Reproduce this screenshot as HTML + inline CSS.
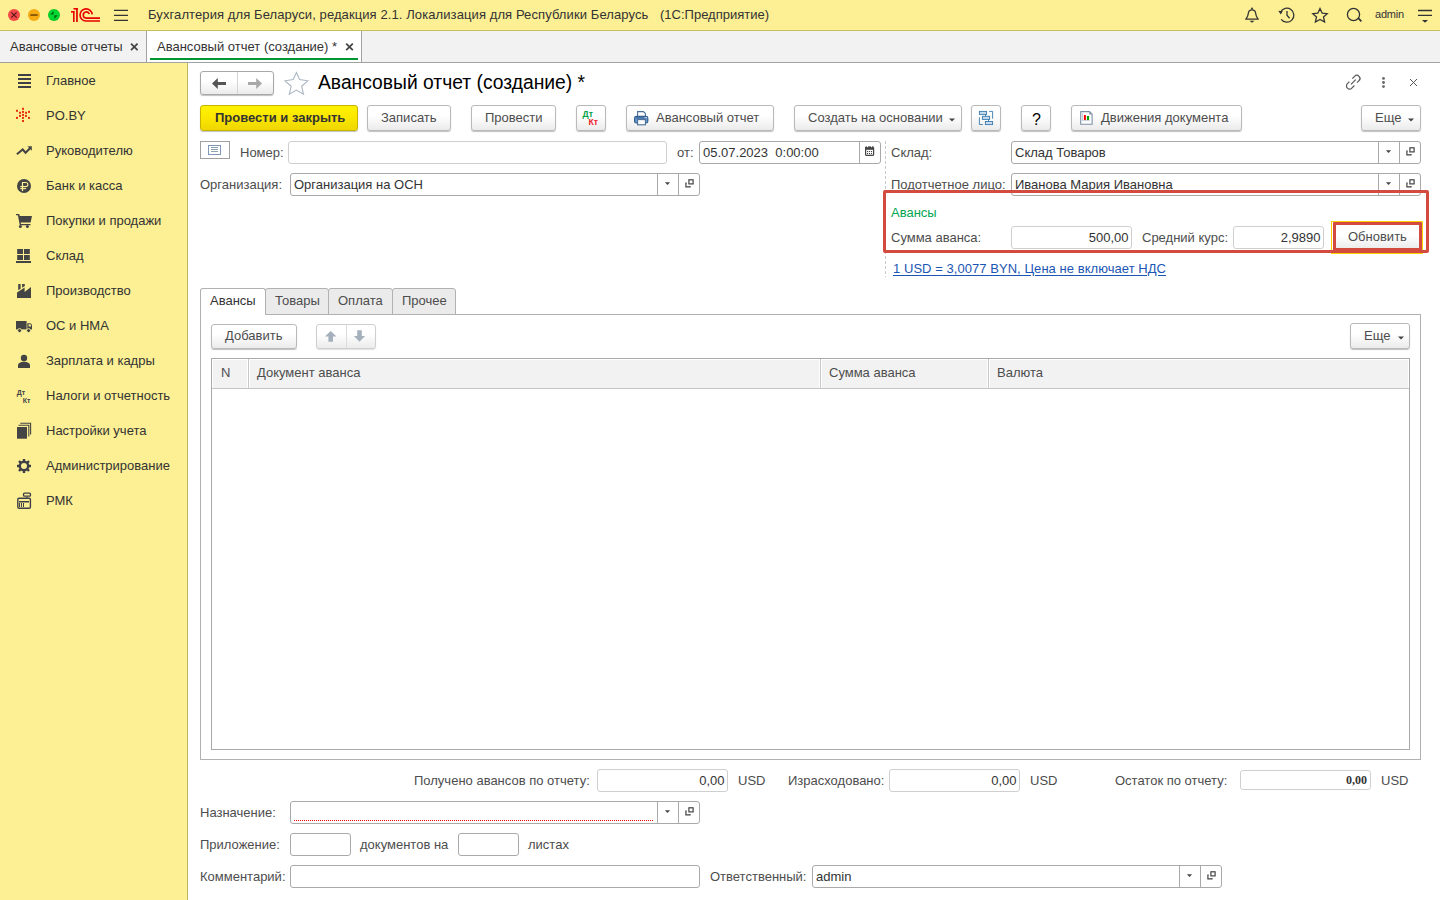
<!DOCTYPE html>
<html><head><meta charset="utf-8">
<style>
*{box-sizing:border-box;margin:0;padding:0}
html,body{width:1440px;height:900px;overflow:hidden;background:#fff;font-family:"Liberation Sans",sans-serif;font-size:13px;color:#4d4d4d}
.a{position:absolute}
.t{position:absolute;line-height:15px;white-space:nowrap}
#titlebar{left:0;top:0;width:1440px;height:31px;background:#fcef94;border-bottom:1px solid #c9bd5e}
#tabbar{left:0;top:31px;width:1440px;height:32px;background:#f2f2f2;border-bottom:1px solid #a2a2a2}
#sidebar{left:0;top:63px;width:188px;height:837px;background:#fcef94;border-right:1px solid #bfb254}
.btn{position:absolute;height:26px;border:1px solid #b9b9b9;border-radius:3px;background:linear-gradient(#fff 0%,#fff 40%,#ebebeb 100%);box-shadow:0 1px 1px rgba(0,0,0,.25);color:#4d4d4d;line-height:23px;white-space:nowrap}
.fld{position:absolute;height:23px;border:1px solid #a9a9a9;border-radius:3px;background:#fff;line-height:21px;white-space:nowrap;color:#333}
.fldl{border-color:#cfcfcf}
.sep{position:absolute;top:0;bottom:0;width:1px;background:#bdbdbd}
</style></head>
<body>
<div id="titlebar" class="a"><div class="a" style="left:0;top:29px;width:1440px;height:1px;background:#fdf29c"></div>
<svg class="a" style="left:0;top:0" width="140" height="30" viewBox="0 0 140 30">
<circle cx="14" cy="15" r="6" fill="#f24a48"/><path d="M11.3 12.3L16.7 17.7M16.7 12.3L11.3 17.7" stroke="#5a1a1a" stroke-width="1.2"/>
<circle cx="34" cy="15" r="6" fill="#f5ab14"/><rect x="30.3" y="14.1" width="7.4" height="1.9" fill="#8a5a00"/>
<circle cx="54" cy="15" r="6" fill="#0bc828"/><circle cx="54" cy="15" r="5" fill="#00d832"/><path d="M50.1 14.6L53.6 11.1V14.6Z M54.3 15.3H57.8L54.3 18.9Z" fill="#006a10"/>
<g fill="#e60000"><rect x="71" y="11" width="3.5" height="1.6"/><rect x="73" y="11" width="1.6" height="11"/><rect x="73.5" y="8" width="4.3" height="1.6"/><rect x="76.1" y="8" width="1.7" height="14"/></g>
<g fill="none" stroke="#e60000" stroke-width="1.65"><path d="M92.2 14.3A6.1 6.1 0 1 0 86 21L100 21"/><path d="M89.3 14A3.1 3.1 0 1 0 86.2 18.1L100 18.1"/></g>
<g stroke="#333" stroke-width="1.3"><path d="M114 10.3H128M114 15.3H128M114 20.4H128"/></g>
</svg>
<div class="t" style="left:148px;top:7px;color:#333;letter-spacing:0.095px">Бухгалтерия для Беларуси, редакция 2.1. Локализация для Республики Беларусь</div><div class="t" style="left:660px;top:7px;color:#333">(1С:Предприятие)</div>
<svg class="a" style="left:1236px;top:0" width="204" height="30" viewBox="1236 0 204 30">
<g fill="none" stroke="#333" stroke-width="1.3">
<path d="M1245.2 19.2H1258.8M1246 19.2C1248 16.5 1248.2 15 1248.4 13C1248.6 10.8 1250 9.8 1252 9.8C1254 9.8 1255.4 10.8 1255.6 13C1255.8 15 1256 16.5 1258 19.2"/>
<path d="M1281.2 19.3A7 7 0 1 0 1280.6 12"/><path d="M1287 11V15.3L1289.6 18.2"/>
<path d="M1320 8.6L1322.2 13.2L1327.2 13.7L1323.5 17L1324.6 22L1320 19.5L1315.4 22L1316.5 17L1312.8 13.7L1317.8 13.2Z" stroke-linejoin="miter"/>
<circle cx="1353.5" cy="14.5" r="6.1"/>
<path d="M1418 10.5H1432M1418 15.3H1432"/>
</g>
<g fill="#333"><circle cx="1252" cy="8.6" r="1"/><path d="M1249.5 20.8H1254.5L1252 22.8Z"/><path d="M1278.3 10.8L1282.8 11.2L1280.7 14.4Z"/>
<path d="M1357.3 18.3L1358.6 17.2L1362 20.7L1360.7 21.9Z"/><path d="M1422 20H1428L1425 22.8Z"/></g>
</svg>
<div class="a" style="left:1375px;top:7px;font-size:11px;line-height:15px;color:#333;letter-spacing:-0.2px">admin</div>
</div>
<div id="tabbar" class="a">
<div class="a" style="left:146px;top:0;width:1px;height:31px;background:#a2a2a2"></div>
<div class="a" style="left:147px;top:0;width:214px;height:31px;background:#fff"></div>
<div class="a" style="left:361px;top:0;width:1px;height:31px;background:#a2a2a2"></div>
<div class="a" style="left:150px;top:27px;width:208px;height:2px;background:#009632"></div>
<div class="t" style="left:10px;top:8px;color:#333">Авансовые отчеты</div>
<div class="t" style="left:157px;top:8px;color:#333">Авансовый отчет (создание) *</div>
<svg class="a" style="left:0;top:0" width="362" height="31" viewBox="0 31 362 31"><g stroke="#444" stroke-width="1.7"><path d="M131 43.6L137.6 50.2M137.6 43.6L131 50.2"/><path d="M346.2 43.6L352.8 50.2M352.8 43.6L346.2 50.2"/></g></svg>
</div>
<div id="sidebar" class="a"><div class="a" style="left:186px;top:0;width:1px;height:837px;background:#fdf59c"></div><svg class="a" style="left:0;top:0" width="187" height="540" viewBox="0 63 187 540">
<g fill="#3f3f48"><rect x="18" y="74" width="13" height="2"/><rect x="18" y="78" width="13" height="2"/><rect x="18" y="82" width="13" height="2"/><rect x="18" y="86" width="13" height="2"/></g>
<g fill="#e8300c"><rect x="22" y="107.8" width="2" height="2"/><rect x="16" y="109.8" width="2" height="2"/><rect x="28" y="110.9" width="2" height="2"/><rect x="19" y="111.8" width="2" height="2"/><rect x="22" y="110.9" width="2" height="2"/><rect x="25" y="111.8" width="2" height="2"/><rect x="19" y="114.9" width="2" height="2"/><rect x="22" y="113.9" width="2" height="2"/><rect x="25" y="114.9" width="2" height="2"/><rect x="16" y="116.9" width="2" height="2"/><rect x="22" y="116.9" width="2" height="2"/><rect x="28" y="116.9" width="2" height="2"/><rect x="22" y="120" width="2" height="2"/></g>
<g fill="#444">
<path d="M16.9 154.3L22.7 149.5L25.6 152.7L30 148.3" fill="none" stroke="#444" stroke-width="2"/><path d="M27.5 146.3H31.8V150.8Z"/>
<circle cx="24" cy="186" r="7"/>
<path d="M16 214H19.2L19.8 216H32L30.6 222.6H20.6L21 224H30.5V225.3H19.8L17.9 215.3H16Z"/><circle cx="20.4" cy="226.6" r="1.5"/><circle cx="27.4" cy="226.6" r="1.5"/>
<rect x="17.2" y="249" width="5.8" height="5"/><rect x="24" y="249" width="5.8" height="5"/><rect x="17.2" y="255" width="5.8" height="5"/><rect x="24" y="255" width="5.8" height="5"/><rect x="16" y="261" width="15" height="2"/>
<path d="M17 298V292.6L24.6 287.6V292L31 287V298Z"/><path d="M18.2 284H20.6V288.7L18.2 290.3Z"/><path d="M22.1 284H24.8V285.9L22.1 287.7Z"/>
<path d="M16 321H26.6V329.4H16Z"/><path d="M27.3 323.2H30.2Q31.9 323.4 32 325.5V329.4H27.3Z"/><circle cx="19.6" cy="330.6" r="2" stroke="#fcef94" stroke-width="0.9"/><circle cx="28.6" cy="330.6" r="2" stroke="#fcef94" stroke-width="0.9"/>
<circle cx="24" cy="358" r="3.2"/><path d="M18 368V365.5C18 363 21 361.8 24 361.8C27 361.8 30 363 30 365.5V368Z"/>
<rect x="17" y="427" width="10" height="11.7"/><path d="M18.5 425.2H28.8V436.5" fill="none" stroke="#444" stroke-width="1.1"/><path d="M20.3 423.3H30.6V434.5" fill="none" stroke="#444" stroke-width="1.1"/>
</g>
<g fill="#fcef94"><rect x="21.9" y="182" width="1.2" height="9.1"/><rect x="20.3" y="188.1" width="5.8" height="1.1"/>
<path d="M28.6 324.3H30.2Q31 324.5 31 325.4V326.4H28.6Z"/></g>
<path d="M22.5 182.55H25.6C27 182.55 27.9 183.35 27.9 184.55C27.9 185.75 27 186.6 25.6 186.6H20.3" fill="none" stroke="#fcef94" stroke-width="1.1"/>
<g font-family="Liberation Sans" font-size="7" font-weight="bold" fill="#3f3f48"><text x="16.8" y="394.8">Дт</text><text x="22.8" y="402.7">Кт</text></g>
<g fill="none" stroke="#3f3f48">
<circle cx="24" cy="466" r="4.2" stroke-width="2.4"/>
<path d="M24 459V461.5M24 470.5V473M17 466H19.5M28.5 466H31M19 461L20.8 462.8M27.2 469.2L29 471M29 461L27.2 462.8M20.8 469.2L19 471" stroke-width="2.4"/>
<rect x="17.8" y="498.3" width="12.6" height="10" rx="1.3" stroke-width="1.4"/><rect x="23.5" y="493.2" width="7" height="3" rx="1" stroke-width="1.3"/>
</g>
<g fill="#3f3f48"><rect x="19" y="501" width="10" height="1.5"/><rect x="19" y="503" width="1" height="4"/><rect x="21" y="503" width="1" height="4"/><rect x="23" y="503" width="1" height="4"/><path d="M26 497H28L27 498.3Z"/></g>
</svg><div class="t" style="left:46px;top:10px;color:#333">Главное</div><div class="t" style="left:46px;top:45px;color:#333">PO.BY</div><div class="t" style="left:46px;top:80px;color:#333">Руководителю</div><div class="t" style="left:46px;top:115px;color:#333">Банк и касса</div><div class="t" style="left:46px;top:150px;color:#333">Покупки и продажи</div><div class="t" style="left:46px;top:185px;color:#333">Склад</div><div class="t" style="left:46px;top:220px;color:#333">Производство</div><div class="t" style="left:46px;top:255px;color:#333">ОС и НМА</div><div class="t" style="left:46px;top:290px;color:#333">Зарплата и кадры</div><div class="t" style="left:46px;top:325px;color:#333">Налоги и отчетность</div><div class="t" style="left:46px;top:360px;color:#333">Настройки учета</div><div class="t" style="left:46px;top:395px;color:#333">Администрирование</div><div class="t" style="left:46px;top:430px;color:#333">РМК</div></div>
<div class="btn" style="left:200px;top:71px;width:74px;height:24px;border-color:#a8a8a8"></div><div class="a" style="left:237px;top:72px;width:1px;height:22px;background:#d4d4d4"></div>
<svg class="a" style="left:200px;top:60px" width="120" height="40" viewBox="200 60 120 40">
<path d="M212 83.5L217.8 78V82.1H226V85H217.8V89Z" fill="#555"/>
<path d="M262 83.5L256.2 78V82.1H248V85H256.2V89Z" fill="#a9a9a9"/>
<path d="M296.4 72.5L299.6 79.6L307.8 80.8L301.6 86.3L303.5 94.2L296.4 90.1L289.3 94.2L291.2 86.3L285 80.8L293.2 79.6Z" fill="none" stroke="#aab6c3" stroke-width="1.1"/>
</svg>
<div class="t" style="left:318px;top:78px;font-size:19.3px;line-height:22px;top:72px;color:#000">Авансовый отчет (создание) *</div>
<svg class="a" style="left:1340px;top:70px" width="90" height="26" viewBox="1340 70 90 26">
<g fill="none" stroke="#555" stroke-width="1.2" stroke-linecap="butt">
<path d="M1352.3 78.6L1354.6 76.3C1355.8 75.1 1357.8 75.1 1359 76.3C1360.2 77.5 1360.2 79.5 1359 80.7L1357 82.7"/>
<path d="M1349.4 81.7L1347.4 83.7C1346.2 84.9 1346.2 86.9 1347.4 88.1C1348.6 89.3 1350.6 89.3 1351.8 88.1L1354.4 85.5"/>
<path d="M1351 84.3L1355.7 79.6"/>
<path d="M1410 79L1417 86M1417 79L1410 86" stroke-width="1"/>
</g>
<g fill="#666"><circle cx="1383.5" cy="78.4" r="1.4"/><circle cx="1383.5" cy="82.5" r="1.4"/><circle cx="1383.5" cy="86.6" r="1.4"/></g>
</svg>
<div class="btn" style="left:200px;top:105px;width:158px;border-color:#c8b400;background:linear-gradient(#fff200 0%,#fbe800 45%,#efd600 100%)"></div>
<div class="t" style="left:215px;top:110px;font-weight:bold;color:#333">Провести и закрыть</div>
<div class="btn" style="left:367px;top:105px;width:84px;"></div><div class="t" style="left:381px;top:110px;color:#4d4d4d">Записать</div>
<div class="btn" style="left:471px;top:105px;width:85px;"></div><div class="t" style="left:485px;top:110px;color:#4d4d4d">Провести</div>
<div class="btn" style="left:576px;top:105px;width:30px;"></div>
<svg class="a" style="left:570px;top:100px;z-index:2" width="440" height="34" viewBox="570 100 440 34">
<g font-family="Liberation Sans" font-weight="bold" font-size="8.6"><text x="582.6" y="117" fill="#00a046">Дт</text><text x="588.6" y="125.2" fill="#ee1c2a">Кт</text></g>
<path d="M637.6 117V111.6H643.4L645.4 113.6V117" fill="#fff" stroke="#4a6e98" stroke-width="1.1"/>
<rect x="634.6" y="116.4" width="13.2" height="6.6" rx="1.8" fill="#6b98cc" stroke="#33608f" stroke-width="1.2"/>
<rect x="636" y="117.4" width="10.4" height="1.1" fill="#33608f"/>
<rect x="644.6" y="117.2" width="1.1" height="0.9" fill="#fff"/><rect x="646.1" y="117.2" width="0.9" height="0.9" fill="#fff"/>
<rect x="637.6" y="119.6" width="7.8" height="5.2" fill="#fff" stroke="#4a6e98" stroke-width="1.1"/>
<g fill="#c8dcee" stroke="#3a7bb0" stroke-width="0.9"><rect x="979.4" y="111.4" width="7.2" height="3"/><rect x="982.4" y="116.3" width="7.2" height="3.1"/><rect x="985.4" y="121.5" width="7.2" height="3.1"/></g>
<g fill="none" stroke="#3a7bb0" stroke-width="0.9"><path d="M985.5 114.4V116.3M988.5 119.4V121.5M989.2 111.4H992.6V118.7M979.4 117.3V124.5H982.8"/></g>
</svg>
<svg class="a" style="left:1075px;top:106px;z-index:2" width="24" height="24" viewBox="1075 106 24 24">
<path d="M1080.7 111.6H1089.6L1092.1 114.1V124.3H1080.7Z" fill="#fff" stroke="#7d8fa3" stroke-width="1.1" stroke-linejoin="round"/>
<path d="M1089.2 111.6V114.5H1092.1" fill="#8598ab"/>
<path d="M1082.5 113V120.6H1089.8" fill="none" stroke="#9fb0c6" stroke-width="0.6"/>
<rect x="1083.9" y="115" width="2" height="5" fill="#ff0000"/><rect x="1086.9" y="116" width="2.2" height="4" fill="#00a000"/>
</svg>
<div class="btn" style="left:626px;top:105px;width:148px;"></div><div class="t" style="left:656px;top:110px;color:#4d4d4d">Авансовый отчет</div>
<div class="btn" style="left:794px;top:105px;width:168px;"></div><div class="t" style="left:808px;top:110px;color:#4d4d4d">Создать на основании</div>
<svg class="a" style="left:948px;top:117px" width="10" height="6"><path d="M1 1.5H7L4 4.5Z" fill="#444"/></svg>
<div class="btn" style="left:971px;top:105px;width:30px;"></div>
<div class="btn" style="left:1021px;top:105px;width:30px;"></div><div class="t" style="left:1032px;top:110.5px;color:#000;font-size:16px;line-height:18px">?</div>
<div class="btn" style="left:1071px;top:105px;width:171px;"></div><div class="t" style="left:1101px;top:110px;color:#4d4d4d">Движения документа</div>
<div class="btn" style="left:1361px;top:105px;width:60px;"></div><div class="t" style="left:1375px;top:110px;color:#4d4d4d">Еще</div>
<svg class="a" style="left:1406.5px;top:116.5px" width="10" height="6"><path d="M1 1.5H7L4 4.5Z" fill="#444"/></svg>
<div class="a" style="left:200px;top:141px;width:30px;height:18px;border:1px solid #a0a0a0;background:#fff"></div>
<svg class="a" style="left:200px;top:141px" width="30" height="18" viewBox="200 141 30 18"><rect x="208.5" y="145.5" width="12" height="9" fill="none" stroke="#8298b8" stroke-width="1"/><path d="M211 147.5H218M211 149.5H218M211 151.5H218" stroke="#8fa2b2" stroke-width="1" fill="none"/></svg>
<div class="t" style="left:240px;top:145px;">Номер:</div>
<div class="fld fldl" style="left:288px;top:141px;width:379px;height:23px"></div>
<div class="t" style="left:677px;top:145px;">от:</div>
<div class="fld " style="left:699px;top:141px;width:182px;height:23px"></div><div class="a" style="left:859px;top:141px;width:1px;height:23px;background:#a9a9a9"></div><div class="t" style="left:703px;top:145px;color:#333">05.07.2023&nbsp;&nbsp;0:00:00</div>
<svg class="a" style="left:860px;top:141px" width="20" height="22" viewBox="860 141 20 22">
<rect x="865.6" y="147.2" width="8" height="8.2" rx="1" fill="#fff" stroke="#444" stroke-width="1.2"/><rect x="865.2" y="146.8" width="8.8" height="3" fill="#444"/>
<g fill="#fff"><rect x="867" y="145.6" width="1" height="1.6"/><rect x="871" y="145.6" width="1" height="1.6"/></g>
<g fill="#444"><rect x="867" y="151" width="1.1" height="1.1"/><rect x="869" y="151" width="1.1" height="1.1"/><rect x="871" y="151" width="1.1" height="1.1"/><rect x="867" y="153" width="1.1" height="1.1"/><rect x="869" y="153" width="1.1" height="1.1"/><rect x="871" y="153" width="1.1" height="1.1"/></g></svg>
<div class="a" style="left:885px;top:141px;width:1px;height:136px;background:repeating-linear-gradient(#c8c8c8 0 3px,transparent 3px 5px)"></div>
<div class="t" style="left:891px;top:145px;">Склад:</div>
<div class="fld " style="left:1011px;top:141px;width:410px;height:23px"></div><div class="a" style="left:1378px;top:141px;width:1px;height:23px;background:#a9a9a9"></div><div class="a" style="left:1399px;top:141px;width:1px;height:23px;background:#a9a9a9"></div><div class="t" style="left:1015px;top:145px;color:#333">Склад Товаров</div>
<svg class="a" style="left:1378px;top:141px;overflow:visible" width="50" height="23" viewBox="1378 141 50 23">
<path d="M1385.9 150.2H1391.1L1388.5 153.0Z" fill="#444"/>
<g fill="none" stroke="#444" stroke-width="1.2"><rect x="1409.9" y="147.8" width="4.2" height="4.1"/><path d="M1407.8 151H1406.9V154.8H1411V153.9"/></g></svg>
<div class="t" style="left:200px;top:177px;">Организация:</div>
<div class="fld " style="left:290px;top:173px;width:410px;height:23px"></div><div class="a" style="left:657px;top:173px;width:1px;height:23px;background:#a9a9a9"></div><div class="a" style="left:678px;top:173px;width:1px;height:23px;background:#a9a9a9"></div><div class="t" style="left:294px;top:177px;color:#333">Организация на ОСН</div>
<svg class="a" style="left:657px;top:173px;overflow:visible" width="50" height="23" viewBox="657 173 50 23">
<path d="M664.9 182.2H670.1L667.5 185.0Z" fill="#444"/>
<g fill="none" stroke="#444" stroke-width="1.2"><rect x="688.9" y="179.8" width="4.2" height="4.1"/><path d="M686.8 183H685.9V186.8H690V185.9"/></g></svg>
<div class="t" style="left:891px;top:177px;">Подотчетное лицо:</div>
<div class="fld " style="left:1011px;top:173px;width:410px;height:23px"></div><div class="a" style="left:1378px;top:173px;width:1px;height:23px;background:#a9a9a9"></div><div class="a" style="left:1399px;top:173px;width:1px;height:23px;background:#a9a9a9"></div><div class="t" style="left:1015px;top:177px;color:#333">Иванова Мария Ивановна</div>
<svg class="a" style="left:1378px;top:173px;overflow:visible" width="50" height="23" viewBox="1378 173 50 23">
<path d="M1385.9 182.2H1391.1L1388.5 185.0Z" fill="#444"/>
<g fill="none" stroke="#444" stroke-width="1.2"><rect x="1409.9" y="179.8" width="4.2" height="4.1"/><path d="M1407.8 183H1406.9V186.8H1411V185.9"/></g></svg>
<div class="t" style="left:891px;top:205px;color:#00a552">Авансы</div>
<div class="t" style="left:891px;top:230px;">Сумма аванса:</div>
<div class="fld fldl" style="left:1011px;top:226px;width:121px;height:23px"></div>
<div class="t" style="left:828.5px;width:300px;text-align:right;top:230px;color:#333">500,00</div>
<div class="t" style="left:1142px;top:230px;">Средний курс:</div>
<div class="fld fldl" style="left:1233px;top:226px;width:91px;height:23px"></div>
<div class="t" style="left:1020.5px;width:300px;text-align:right;top:230px;color:#333">2,9890</div>
<div class="a" style="left:1336px;top:225px;width:83px;height:23px;background:linear-gradient(#fff 0%,#fff 45%,#ececec 100%)"></div>
<div class="t" style="left:1348px;top:229px;color:#4d4d4d">Обновить</div>
<div class="a" style="left:1331px;top:221px;width:92px;height:33px;border:1px solid #ffd000"></div>
<div class="a" style="left:1333px;top:222px;width:89px;height:29px;border:3px solid #d34b3e;border-radius:1px"></div>
<div class="a" style="left:883px;top:190px;width:546px;height:63px;border:3px solid #d34b3e;border-radius:2px"></div>
<div class="t" style="left:893px;top:261px;color:#1c56b4;text-decoration:underline;text-underline-offset:1.5px;letter-spacing:0.05px">1 USD = 3,0077 BYN, Цена не включает НДС</div>
<div class="a" style="left:200px;top:314px;width:1221px;height:446px;border:1px solid #b1b1b1;border-top-color:#b1b1b1"></div>
<div class="a" style="left:200px;top:288px;width:66px;height:27px;border:1px solid #b1b1b1;border-bottom:none;border-radius:3px 3px 0 0;background:#fff"></div>
<div class="a" style="left:265px;top:288px;width:64px;height:27px;border:1px solid #b1b1b1;border-radius:3px 3px 0 0;background:#ebebeb"></div>
<div class="t" style="left:275px;top:293px;color:#4d4d4d">Товары</div>
<div class="a" style="left:328px;top:288px;width:65px;height:27px;border:1px solid #b1b1b1;border-radius:3px 3px 0 0;background:#ebebeb"></div>
<div class="t" style="left:338px;top:293px;color:#4d4d4d">Оплата</div>
<div class="a" style="left:392px;top:288px;width:64px;height:27px;border:1px solid #b1b1b1;border-radius:3px 3px 0 0;background:#ebebeb"></div>
<div class="t" style="left:402px;top:293px;color:#4d4d4d">Прочее</div>
<div class="t" style="left:210px;top:293px;color:#333">Авансы</div>
<div class="btn" style="left:211px;top:324px;width:86px;height:25px"></div>
<div class="t" style="left:225px;top:328px;">Добавить</div>
<div class="btn" style="left:316px;top:324px;width:60px;height:25px;border-color:#cfcfcf;box-shadow:0 1px 1px rgba(0,0,0,.12)"></div><div class="a" style="left:346px;top:325px;width:1px;height:23px;background:#dcdcdc"></div>
<svg class="a" style="left:316px;top:324px" width="60" height="25" viewBox="316 324 60 25"><g fill="#a4b0bb">
<path d="M330.7 331L336.5 336.6H333V341.8H328.4V336.6H324.9Z"/><path d="M359.5 341.8L353.9 335.9H357.2V330.2H361.8V335.9H365.1Z"/></g></svg>
<div class="btn" style="left:1350px;top:323px;width:60px;height:26px"></div>
<div class="t" style="left:1364px;top:328px;">Еще</div>
<svg class="a" style="left:1396.5px;top:334.5px" width="10" height="6"><path d="M1 1.5H7L4 4.5Z" fill="#444"/></svg>
<div class="a" style="left:211px;top:358px;width:1199px;height:392px;border:1px solid #a9a9a9;background:#fff"></div>
<div class="a" style="left:212px;top:359px;width:1197px;height:29px;background:#f2f2f2;border:1px solid #fff;border-bottom:none"></div>
<div class="a" style="left:212px;top:388px;width:1197px;height:1px;background:#c4c4c4"></div>
<div class="a" style="left:247px;top:359px;width:3px;height:29px;background:#fff"></div><div class="a" style="left:248px;top:359px;width:1px;height:29px;background:#c8c8c8"></div>
<div class="a" style="left:819px;top:359px;width:3px;height:29px;background:#fff"></div><div class="a" style="left:820px;top:359px;width:1px;height:29px;background:#c8c8c8"></div>
<div class="a" style="left:987px;top:359px;width:3px;height:29px;background:#fff"></div><div class="a" style="left:988px;top:359px;width:1px;height:29px;background:#c8c8c8"></div>
<div class="t" style="left:221px;top:365px;">N</div>
<div class="t" style="left:257px;top:365px;">Документ аванса</div>
<div class="t" style="left:829px;top:365px;">Сумма аванса</div>
<div class="t" style="left:997px;top:365px;">Валюта</div>
<div class="t" style="left:414px;top:773px;">Получено авансов по отчету:</div>
<div class="fld fldl" style="left:597px;top:769px;width:131px;height:23px"></div>
<div class="t" style="left:424.5px;width:300px;text-align:right;top:773px;color:#333">0,00</div>
<div class="t" style="left:738px;top:773px;">USD</div>
<div class="t" style="left:788px;top:773px;">Израсходовано:</div>
<div class="fld fldl" style="left:889px;top:769px;width:131px;height:23px"></div>
<div class="t" style="left:716.5px;width:300px;text-align:right;top:773px;color:#333">0,00</div>
<div class="t" style="left:1030px;top:773px;">USD</div>
<div class="t" style="left:1115px;top:773px;">Остаток по отчету:</div>
<div class="fld fldl" style="left:1240px;top:770px;width:131px;height:20px"></div>
<div class="t" style="left:1067px;width:300px;text-align:right;top:773px;color:#333;font-family:'Liberation Serif',serif;font-weight:bold;font-size:12px">0,00</div>
<div class="t" style="left:1381px;top:773px;">USD</div>
<div class="t" style="left:200px;top:805px;">Назначение:</div>
<div class="fld " style="left:290px;top:801px;width:410px;height:23px"></div><div class="a" style="left:657px;top:801px;width:1px;height:23px;background:#a9a9a9"></div><div class="a" style="left:678px;top:801px;width:1px;height:23px;background:#a9a9a9"></div>
<svg class="a" style="left:657px;top:801px;overflow:visible" width="50" height="23" viewBox="657 801 50 23">
<path d="M664.9 810.2H670.1L667.5 813.0Z" fill="#444"/>
<g fill="none" stroke="#444" stroke-width="1.2"><rect x="688.9" y="807.8" width="4.2" height="4.1"/><path d="M686.8 811H685.9V814.8H690V813.9"/></g></svg>
<div class="a" style="left:294px;top:820px;width:360px;height:1px;background:repeating-linear-gradient(90deg,#e00 0 1px,transparent 1px 2px)"></div>
<div class="t" style="left:200px;top:837px;">Приложение:</div>
<div class="fld " style="left:290px;top:833px;width:61px;height:23px"></div>
<div class="t" style="left:360px;top:837px;">документов на</div>
<div class="fld " style="left:458px;top:833px;width:61px;height:23px"></div>
<div class="t" style="left:528px;top:837px;">листах</div>
<div class="t" style="left:200px;top:869px;">Комментарий:</div>
<div class="fld " style="left:290px;top:865px;width:410px;height:23px"></div>
<div class="t" style="left:710px;top:869px;">Ответственный:</div>
<div class="fld " style="left:812px;top:865px;width:410px;height:23px"></div><div class="a" style="left:1179px;top:865px;width:1px;height:23px;background:#a9a9a9"></div><div class="a" style="left:1200px;top:865px;width:1px;height:23px;background:#a9a9a9"></div><div class="t" style="left:816px;top:869px;color:#333">admin</div>
<svg class="a" style="left:1179px;top:865px;overflow:visible" width="50" height="23" viewBox="1179 865 50 23">
<path d="M1186.9 874.2H1192.1L1189.5 877.0Z" fill="#444"/>
<g fill="none" stroke="#444" stroke-width="1.2"><rect x="1210.9" y="871.8" width="4.2" height="4.1"/><path d="M1208.8 875H1207.9V878.8H1212V877.9"/></g></svg>
</body></html>
